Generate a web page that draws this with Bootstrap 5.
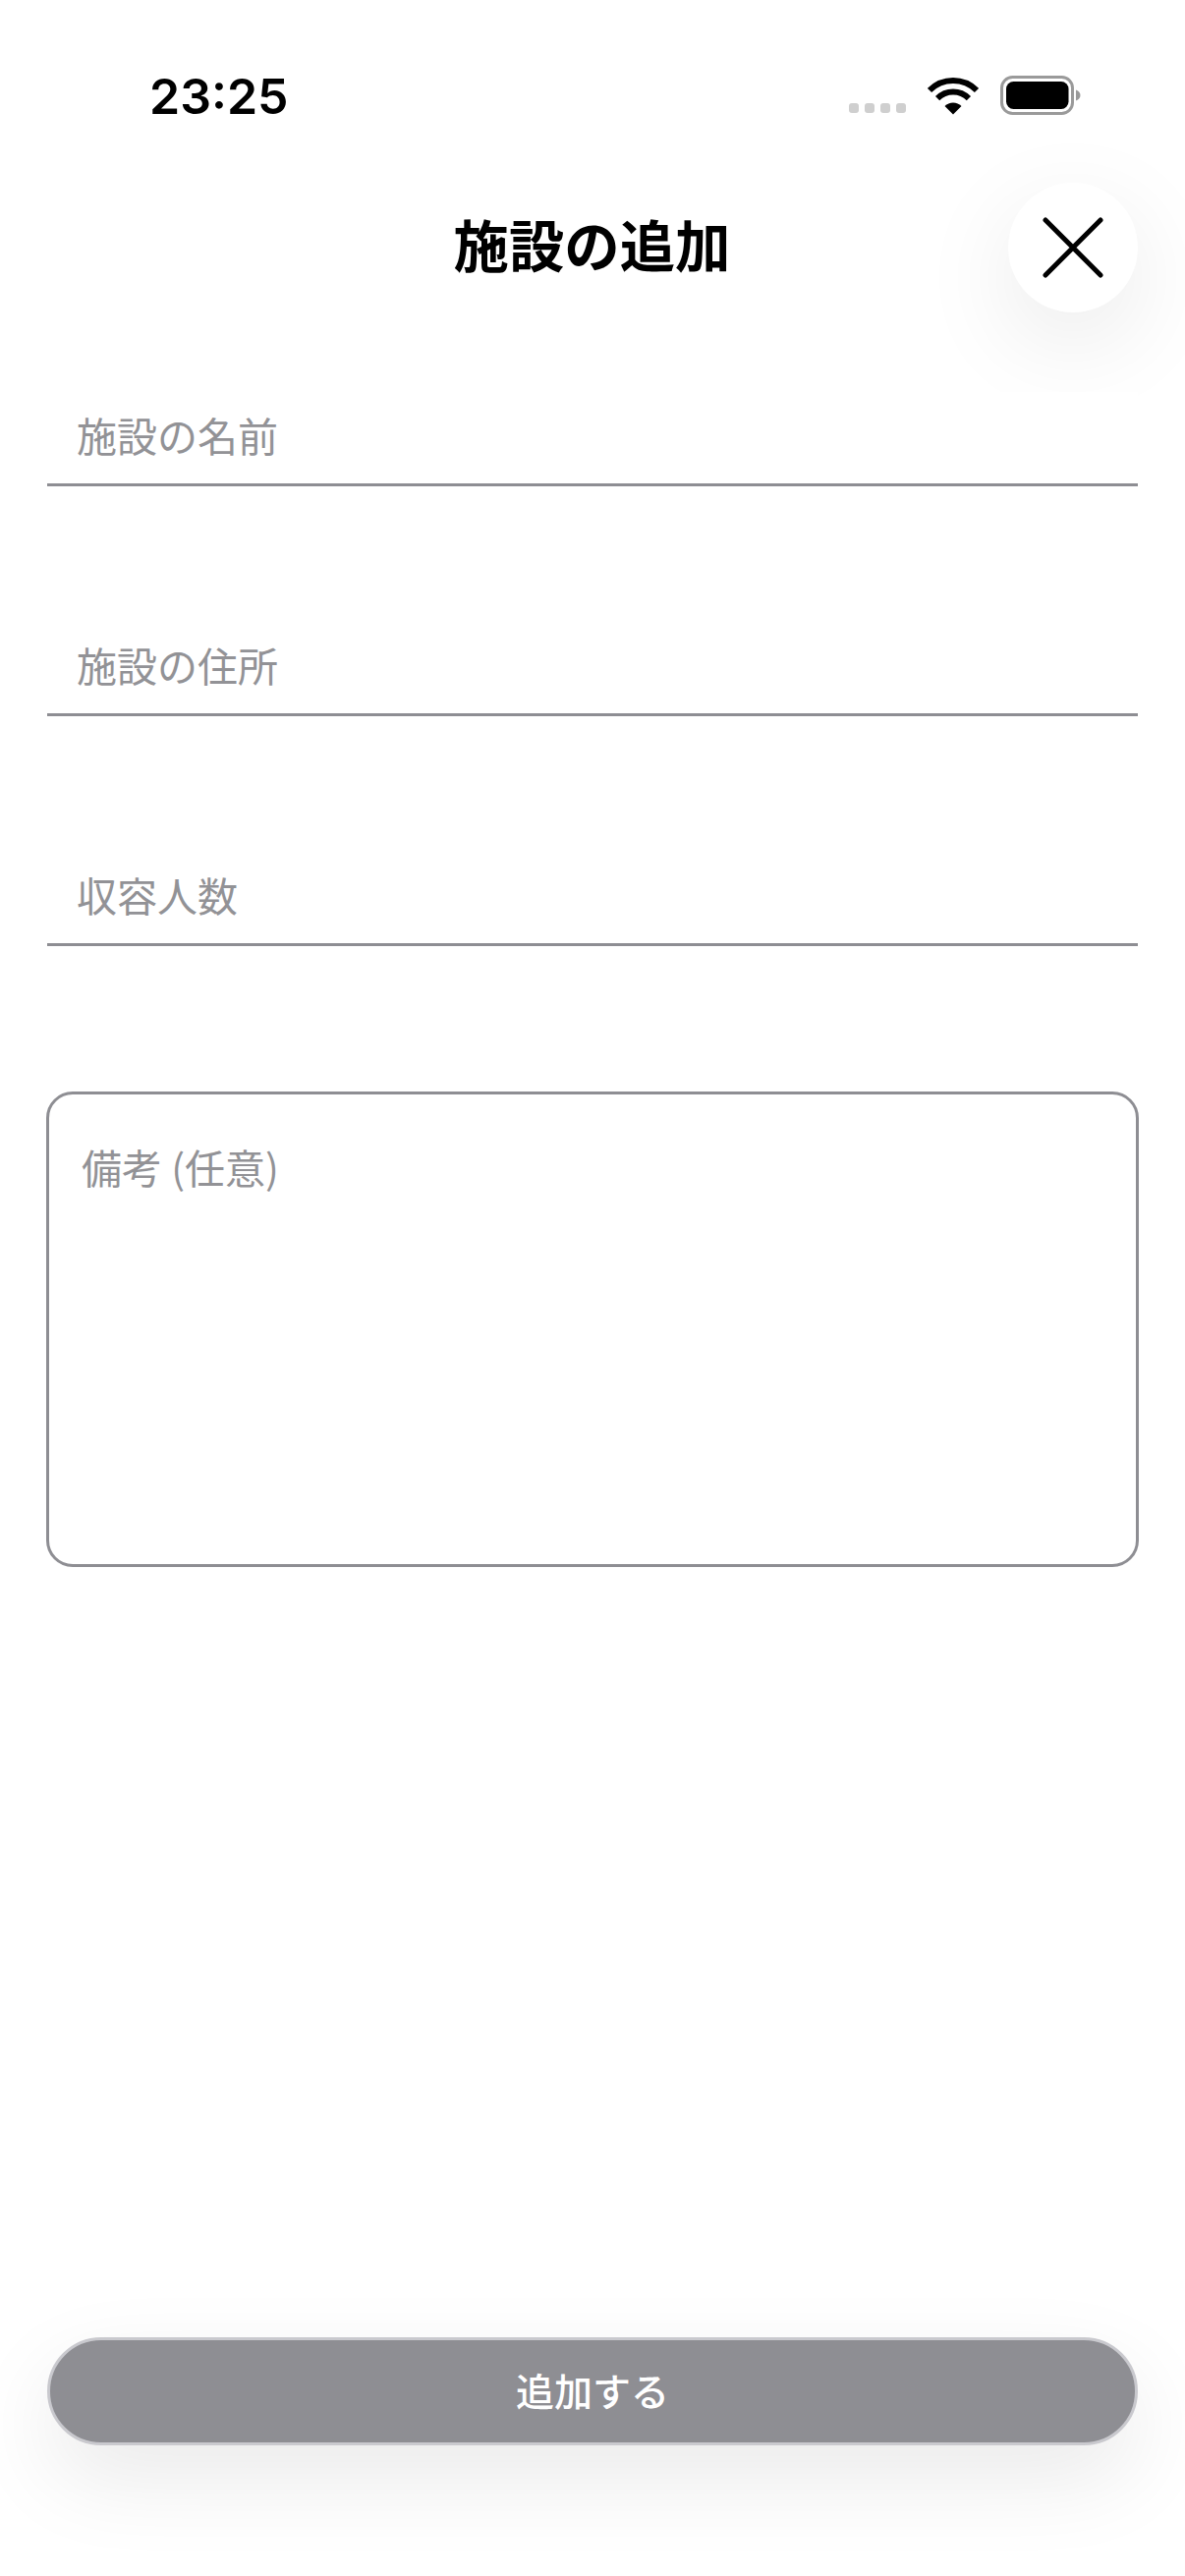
<!DOCTYPE html>
<html lang="ja">
<head>
<meta charset="utf-8">
<title>施設の追加</title>
<link rel="stylesheet" href="https://cdn.jsdelivr.net/npm/bootstrap@5.3.0/dist/css/bootstrap.min.css">
<style>
html, body { background: #fff; }
body { font-family: "Noto Sans CJK JP", "Liberation Sans", sans-serif; overflow: hidden; }
.screen { height: 2622px; padding: 0 48px 133px 48px; }
.status-row { height: 186px; padding: 75px 58px 0 104px; }
.clock { font-family: Inter, "Liberation Sans", sans-serif; font-size: 50px; font-weight: 600; line-height: 46px; color: #000; letter-spacing: 0; }
.status-icons { gap: 22px; height: 40px; margin-top: 2px; }
.signal-dots { gap: 6px; padding-bottom: 2px; margin-left: 1px; }
.signal-dots span { width: 10px; height: 10px; border-radius: 3px; background: #cfcfcf; display: block; }
.head-row { display: grid; grid-template-columns: 1fr auto 1fr; align-items: center; height: 132px; margin-bottom: 81px; }
.head-title { font-size: 56.4px; font-weight: 700; line-height: 1; color: #000; margin: 0 0 0 -1px; padding-bottom: 8px; }
.close-round { width: 132px; height: 132px; border: 0; padding: 0; justify-self: end; background: #fff; box-shadow: 0 30px 100px rgba(0,0,0,.085); }
.line-field { height: 96px; margin-bottom: 138px; padding: 0 30px 8px; border: 0; border-bottom: 3px solid #8e8e93; border-radius: 0; font-size: 41px; line-height: 1.4; }
.line-field:focus, .box-field:focus { box-shadow: none; border-color: #8e8e93; }
.form-control::placeholder { color: #929296; opacity: 1; }
.box-field { width: auto; height: 484px; margin: 10px -1px 0; padding: 45px 33px; border: 3px solid #8e8e93; border-radius: 27px; font-size: 41px; line-height: 1.4; resize: none; }
.submit-pill { height: 110px; padding-bottom: 10px; font-size: 39px; font-weight: 500; line-height: 1; color: #fff; background: #8e8e93; border: 3px solid #c9c9ce; border-radius: 55px; box-shadow: 0 34px 90px rgba(0,0,0,.085); }
.submit-pill:hover, .submit-pill:active { color: #fff; background: #8e8e93; border-color: #c9c9ce; }
</style>
</head>
<body>
<main class="screen d-flex flex-column">
  <div class="status-row d-flex justify-content-between align-items-start">
    <div class="clock">23:25</div>
    <div class="status-icons d-flex align-items-end">
      <div class="signal-dots d-flex"><span></span><span></span><span></span><span></span></div>
      <svg width="52" height="38" viewBox="0 0 52 38" aria-hidden="true">
        <path d="M2 13A34 34 0 0 1 50 13" fill="none" stroke="#000" stroke-width="6"/>
        <path d="M10.1 21.1A22.5 22.5 0 0 1 41.9 21.1" fill="none" stroke="#000" stroke-width="6"/>
        <path d="M26 37.5L17.5 29A12 12 0 0 1 34.5 29Z" fill="#000"/>
      </svg>
      <svg width="82" height="40" viewBox="0 0 82 40" aria-hidden="true">
        <rect x="1.500" y="1.500" width="72" height="37" rx="11" fill="#fff" stroke="#9a9a9a" stroke-width="3"/>
        <rect x="6" y="6" width="63.500" height="28" rx="7.500" fill="#000"/>
        <path d="M77 14.500C80 15.500 81.500 17.500 81.500 20S80 24.500 77 25.500Z" fill="#9a9a9a"/>
      </svg>
    </div>
  </div>
  <header class="head-row">
    <span></span>
    <h1 class="head-title">施設の追加</h1>
    <button type="button" class="close-round rounded-circle d-flex align-items-center justify-content-center" aria-label="閉じる">
      <svg width="64" height="64" viewBox="0 0 64 64" aria-hidden="true"><path d="M4 4L60 60M60 4L4 60" fill="none" stroke="#000" stroke-width="5" stroke-linecap="round"/></svg>
    </button>
  </header>
  <form class="d-flex flex-column flex-grow-1">
    <input class="form-control line-field" type="text" placeholder="施設の名前">
    <input class="form-control line-field" type="text" placeholder="施設の住所">
    <input class="form-control line-field" type="text" placeholder="収容人数">
    <textarea class="form-control box-field" placeholder="備考 (任意)"></textarea>
    <button type="submit" class="btn submit-pill w-100 mt-auto">追加する</button>
  </form>
</main>
<script src="https://cdn.jsdelivr.net/npm/bootstrap@5.3.0/dist/js/bootstrap.bundle.min.js"></script>
</body>
</html>
